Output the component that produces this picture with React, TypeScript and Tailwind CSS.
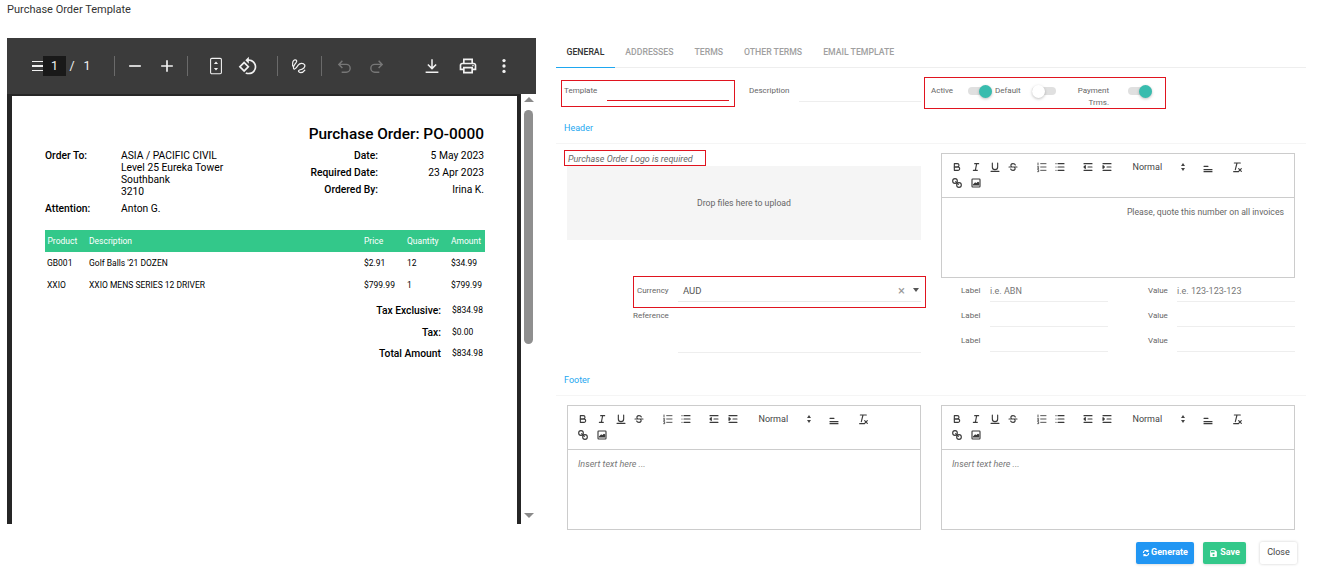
import type { ReactNode } from 'react';

function PdfIcon({ children, size = 20 }: { children: ReactNode; size?: number }) {
  return (
    <div className="flex w-[32px] h-[32px] items-center justify-center shrink-0">
      <svg width={size} height={size} viewBox="0 0 24 24" fill="currentColor">
        {children}
      </svg>
    </div>
  );
}

function PdfSeparator() {
  return <div className="w-px h-[20px] bg-[#6a6a6a] shrink-0" />;
}

function PdfToolbar() {
  return (
    <div className="flex items-center h-[56px] bg-[#3b3b3b] text-[#f1f1f1] text-[12.5px] shrink-0">
      <div className="ml-[25px] w-[11px] h-[10px] border-y-[1.5px] border-[#f1f1f1] flex items-center shrink-0">
        <div className="w-full h-[1.5px] bg-[#f1f1f1]" />
      </div>
      <div className="w-[23px] h-[20px] bg-[#191919] flex items-center justify-center shrink-0">1</div>
      <span className="w-[12px] text-center shrink-0">/</span>
      <span className="w-[18px] text-center shrink-0">1</span>
      <div className="ml-[18px]"><PdfSeparator /></div>
      <div className="ml-[4px]">
        <PdfIcon><path d="M19 13H5v-2h14v2z" /></PdfIcon>
      </div>
      <PdfIcon><path d="M19 13h-6v6h-2v-6H5v-2h6V5h2v6h6v2z" /></PdfIcon>
      <div className="ml-[4px]"><PdfSeparator /></div>
      <div className="ml-[12px]">
        <PdfIcon>
          <rect x="5.500" y="2.800" width="13" height="18.400" rx="1.500" fill="none" stroke="currentColor" strokeWidth="1.300" />
          <path d="M12 6.500l2.500 3h-5zM12 17.500l-2.500-3h5z" />
        </PdfIcon>
      </div>
      <PdfIcon>
        <path d="M7.34 6.41L.86 12.9l6.49 6.48 6.49-6.48-6.5-6.49zM3.69 12.9l3.66-3.66L11 12.9l-3.66 3.66-3.65-3.66zm15.67-6.26C17.61 4.88 15.3 4 13 4V.76L8.76 5 13 9.24V6c1.79 0 3.58.68 4.95 2.05 2.73 2.73 2.73 7.17 0 9.9C16.58 19.32 14.79 20 13 20c-.97 0-1.94-.21-2.84-.61l-1.49 1.49C10.02 21.62 11.51 22 13 22c2.3 0 4.61-.88 6.36-2.64 3.52-3.51 3.52-9.21 0-12.72z" />
      </PdfIcon>
      <div className="ml-[13px]"><PdfSeparator /></div>
      <div className="ml-[5px]">
        <PdfIcon>
          <path
            d="M4.400 12C4 8 5 5 7 4.600C9 4.400 10 6 8.500 8C6.500 10.500 4.500 13 5.500 15C6.500 17 9 14 11 11C13 8.500 17 8 19 11C19.500 14 16 16 12.500 16.800C10.500 17.500 11.500 20 14 20C16 20 18 18.500 19 17"
            fill="none"
            stroke="currentColor"
            strokeWidth="1.500"
            strokeLinecap="round"
            strokeLinejoin="round"
          />
        </PdfIcon>
      </div>
      <div className="ml-[6px]"><PdfSeparator /></div>
      <div className="ml-[6px] text-[#777777]">
        <PdfIcon size={17}>
          <path d="M9 14 4 9l5-5M4 9h10.500a5.500 5.500 0 0 1 0 11H8" fill="none" stroke="currentColor" strokeWidth="2" />
        </PdfIcon>
      </div>
      <div className="text-[#777777]">
        <PdfIcon size={17}>
          <path d="M15 14l5-5-5-5M20 9H9.500a5.500 5.500 0 0 0 0 11H16" fill="none" stroke="currentColor" strokeWidth="2" />
        </PdfIcon>
      </div>
      <div className="ml-[24px]">
        <PdfIcon size={18}>
          <path d="M12 3v12M6.500 10l5.500 5.500 5.500-5.500M3.500 20.200h17" fill="none" stroke="currentColor" strokeWidth="2" />
        </PdfIcon>
      </div>
      <div className="ml-[4px]">
        <PdfIcon>
          <path d="M19 8h-1V3H6v5H5c-1.66 0-3 1.34-3 3v6h4v4h12v-4h4v-6c0-1.66-1.34-3-3-3zM8 5h8v3H8V5zm8 12v2H8v-4h8v2zm2-2v-2H6v2H4v-4c0-.55.45-1 1-1h14c.55 0 1 .45 1 1v4h-2z" />
          <circle cx="18" cy="11.500" r="1" />
        </PdfIcon>
      </div>
      <div className="ml-[4px]">
        <PdfIcon>
          <circle cx="12" cy="5.500" r="2" />
          <circle cx="12" cy="12" r="2" />
          <circle cx="12" cy="18.500" r="2" />
        </PdfIcon>
      </div>
    </div>
  );
}

function InfoRow({ label, value }: { label: string; value: string }) {
  return (
    <div className="flex h-[12px] items-center whitespace-nowrap">
      <span className="w-[68px] text-right font-medium">{label}</span>
      <span className="w-[106px] text-right">{value}</span>
    </div>
  );
}

function TotalRow({ label, value }: { label: string; value: string }) {
  return (
    <div className="flex h-[21.5px] items-center">
      <span className="w-[396px] text-right text-[10.3px] font-medium">{label}</span>
      <span className="ml-[11px] text-[8.5px]">{value}</span>
    </div>
  );
}

const lineItems = [
  { code: 'GB001', name: "Golf Balls '21 DOZEN", price: '$2.91', qty: '12', amount: '$34.99' },
  { code: 'XXIO', name: 'XXIO MENS SERIES 12 DRIVER', price: '$799.99', qty: '1', amount: '$799.99' },
];

function PdfPage() {
  return (
    <div className="flex-1 bg-white pl-[33px] pt-[29px] text-black text-[10.3px] overflow-hidden">
      <div className="w-[439px] text-right text-[15.4px] leading-[18px] font-medium whitespace-nowrap">
        Purchase Order: PO-0000
      </div>
      <div className="flex mt-[7px] w-[439px] justify-between">
        <div>
          <div className="flex">
            <span className="w-[76px] font-medium leading-[12px]">Order To:</span>
            <div className="leading-[12px]">
              <div>ASIA / PACIFIC CIVIL</div>
              <div>Level 25 Eureka Tower</div>
              <div>Southbank</div>
              <div>3210</div>
            </div>
          </div>
          <div className="flex mt-[5px] leading-[12px]">
            <span className="w-[76px] font-medium">Attention:</span>
            <span>Anton G.</span>
          </div>
        </div>
        <div className="flex flex-col gap-[5px]">
          <InfoRow label="Date:" value="5 May 2023" />
          <InfoRow label="Required Date:" value="23 Apr 2023" />
          <InfoRow label="Ordered By:" value="Irina K." />
        </div>
      </div>
      <div className="mt-[15px] w-[440px] h-[22px] bg-[#33c88a] text-white text-[8.5px] grid grid-cols-[44px_275px_43px_44px_34px] items-center">
        <span className="pl-[2.5px]">Product</span>
        <span>Description</span>
        <span>Price</span>
        <span>Quantity</span>
        <span>Amount</span>
      </div>
      {lineItems.map((item) => (
        <div key={item.code} className="w-[440px] h-[22px] text-[8.5px] grid grid-cols-[44px_275px_43px_44px_34px] items-center whitespace-nowrap">
          <span className="pl-[2px]">{item.code}</span>
          <span>{item.name}</span>
          <span>{item.price}</span>
          <span>{item.qty}</span>
          <span>{item.amount}</span>
        </div>
      ))}
      <div className="mt-[4px]">
        <TotalRow label="Tax Exclusive:" value="$834.98" />
        <TotalRow label="Tax:" value="$0.00" />
        <TotalRow label="Total Amount" value="$834.98" />
      </div>
    </div>
  );
}

function PdfViewer() {
  return (
    <div className="w-[529px] h-[486px] flex flex-col shrink-0">
      <PdfToolbar />
      <div className="flex-1 flex min-h-0">
        <div className="flex-1 flex flex-col bg-[#262626] pl-[5px] pt-[2px] pr-[4px] min-w-0">
          <PdfPage />
        </div>
        <div className="w-[15px] bg-white flex flex-col items-center shrink-0">
          <div className="mt-[3px] w-0 h-0 border-x-[5px] border-x-transparent border-b-[5px] border-b-[#8a8a8a]" />
          <div className="mt-[8px] w-[9px] h-[234px] rounded-full bg-[#8f8f8f]" />
          <div className="mt-auto mb-[6px] w-0 h-0 border-x-[5px] border-x-transparent border-t-[5px] border-t-[#8a8a8a]" />
        </div>
      </div>
    </div>
  );
}

function EditorIcon({ children }: { children: ReactNode }) {
  return (
    <div className="w-[18.7px] h-[16px] flex items-center justify-center shrink-0">
      <svg width="12" height="12" viewBox="0 0 18 18" fill="none" stroke="#3a3a3a" strokeWidth="1.7" strokeLinecap="round" strokeLinejoin="round">
        {children}
      </svg>
    </div>
  );
}

function EditorToolbar() {
  return (
    <div className="h-[44px] border-b border-[#cccccc] pl-[6px] pt-[5px]">
      <div className="flex items-center h-[16px]">
        <EditorIcon>
          <path d="M5,4H9.500A2.500,2.500,0,0,1,12,6.500v0A2.500,2.500,0,0,1,9.500,9H5V4Z" />
          <path d="M5,9h5.500A2.500,2.500,0,0,1,13,11.500v0A2.500,2.500,0,0,1,10.500,14H5V9Z" />
        </EditorIcon>
        <EditorIcon>
          <path d="M7 4h6M5 14h6M8 14l2-10" />
        </EditorIcon>
        <EditorIcon>
          <path d="M5,3V9a4,4,0,0,0,4,4h0a4,4,0,0,0,4-4V3M3 15.500h12" />
        </EditorIcon>
        <EditorIcon>
          <path d="M3 9h12M12.500 6C12 4.500 10.500 4 9 4 6 4 5 6.500 6.500 8M5.500 12c.5 1.500 2 2 3.500 2 3 0 4-2.500 2.500-4" />
        </EditorIcon>
        <div className="ml-[9.500px]" />
        <EditorIcon>
          <path d="M7 4h8M7 9h8M7 14h8M3 3v3M2.500 8.500h1.500L2.500 11h1.500M2.500 13h1.500v3h-1.500" strokeWidth="1.300" />
        </EditorIcon>
        <EditorIcon>
          <path d="M6 4h9M6 9h9M6 14h9M3 4h.01M3 9h.01M3 14h.01" />
        </EditorIcon>
        <div className="ml-[9.500px]" />
        <EditorIcon>
          <path d="M3 14h12M3 4h12M9 9h6M5 7v4L3 9z" />
        </EditorIcon>
        <EditorIcon>
          <path d="M3 14h12M3 4h12M9 9h6M3 7v4l2-2z" />
        </EditorIcon>
        <span className="ml-[16px] w-[46px] text-[9px] leading-[12px] text-[#444444]">Normal</span>
        <div className="flex flex-col gap-[1.500px] w-[8px] items-center">
          <div className="w-0 h-0 border-x-[2.500px] border-x-transparent border-b-[3px] border-b-[#444444]" />
          <div className="w-0 h-0 border-x-[2.500px] border-x-transparent border-t-[3px] border-t-[#444444]" />
        </div>
        <div className="ml-[12px]">
          <EditorIcon>
            <path d="M3 8h6M3 13h12M3 16h12" />
          </EditorIcon>
        </div>
        <div className="ml-[10px]">
          <EditorIcon>
            <path d="M5 3h9M9 3l-2.500 10M4 16h7M11.500 11.500l4 4M15.500 11.500l-4 4" />
          </EditorIcon>
        </div>
      </div>
      <div className="flex items-center h-[16px]">
        <EditorIcon>
          <path d="M7 7l4 4" />
          <circle cx="6" cy="6" r="3.500" />
          <circle cx="12" cy="12" r="3.500" />
        </EditorIcon>
        <EditorIcon>
          <rect x="3" y="3" width="12" height="12" rx="1" />
          <path d="M5 12l3-3 1.500 1.500L12 8l1 1v3z" fill="#3a3a3a" />
        </EditorIcon>
      </div>
    </div>
  );
}

function Editor({ children }: { children: ReactNode }) {
  return (
    <div className="w-[354px] h-[125px] border border-[#cccccc]">
      <EditorToolbar />
      {children}
    </div>
  );
}

function FieldLabel({ children }: { children: ReactNode }) {
  return <span className="block text-[8px] leading-[12px] text-[#666666] whitespace-nowrap">{children}</span>;
}

function Toggle({ on }: { on: boolean }) {
  return (
    <div className={`w-[24px] h-[8px] rounded-full bg-[#e0e0e0] flex items-center shrink-0 ${on ? 'justify-end' : 'justify-start'}`}>
      <div className={`w-[13px] h-[13px] rounded-full shadow-[0_1px_3px_rgba(0,0,0,0.25)] ${on ? 'bg-[#38bcae]' : 'bg-white'}`} />
    </div>
  );
}

function MetaRow({ placeholderLabel, placeholderValue }: { placeholderLabel?: string; placeholderValue?: string }) {
  return (
    <div className="flex h-[25px] items-start">
      <div className="w-[29px] ml-[20px] shrink-0 pt-[2px]"><FieldLabel>Label</FieldLabel></div>
      <div className="w-[118px] h-[19px] pt-[1px] border-b border-[#eeeeee] text-[9px] leading-[14px] text-[#777777] shrink-0">{placeholderLabel}</div>
      <div className="w-[29px] ml-[40px] shrink-0 pt-[2px]"><FieldLabel>Value</FieldLabel></div>
      <div className="w-[118px] h-[19px] pt-[1px] border-b border-[#eeeeee] text-[9px] leading-[14px] text-[#777777] shrink-0">{placeholderValue}</div>
    </div>
  );
}

const tabs = ['GENERAL', 'ADDRESSES', 'TERMS', 'OTHER TERMS', 'EMAIL TEMPLATE'];

function TemplateForm() {
  return (
    <div className="w-[750px] h-[540px] ml-[20px] shrink-0 text-[#555555]">
      <div className="flex h-[30px] border-b border-[#eeeeee]">
        {tabs.map((tab, index) => (
          <div
            key={tab}
            className={`h-[30px] px-[10.500px] pt-[8px] text-[8.7px] leading-[13px] font-medium whitespace-nowrap ${
              index === 0 ? 'text-[#333333] border-b border-[#1ea7f0]' : 'text-[#a0a0a0]'
            }`}
          >
            {tab}
          </div>
        ))}
      </div>

      <div className="flex items-start h-[45px] pl-[5px]">
        <div className="mt-[12px] w-[174px] h-[27px] border border-[#e0141f] pl-[2px] pt-[4px] relative shrink-0">
          <FieldLabel>Template</FieldLabel>
          <div className="absolute left-[45px] top-[19px] w-[122px] border-b border-[#e0141f]" />
        </div>
        <div className="mt-[17px] ml-[14px] w-[50px] shrink-0"><FieldLabel>Description</FieldLabel></div>
        <div className="mt-[16px] w-[122px] h-[18px] border-b border-[#eeeeee] shrink-0" />
        <div className="mt-[9px] ml-[3px] w-[242px] h-[32px] border border-[#e0141f] flex pl-[6px] pt-[6px] shrink-0">
          <div className="w-[37px] pt-[1px] shrink-0"><FieldLabel>Active</FieldLabel></div>
          <div className="pt-[3px]"><Toggle on /></div>
          <div className="w-[37px] ml-[3px] pt-[1px] shrink-0"><FieldLabel>Default</FieldLabel></div>
          <div className="pt-[3px]"><Toggle on={false} /></div>
          <div className="w-[52px] ml-[21px] pt-[1px] shrink-0 text-right pr-[20px]">
            <FieldLabel>Payment</FieldLabel>
            <FieldLabel>Trms.</FieldLabel>
          </div>
          <div className="pt-[3px] -ml-[1px]"><Toggle on /></div>
        </div>
      </div>

      <div className="h-[31px] pl-[8px] pt-[9px] border-b border-[#f5f5f5] text-[9px] leading-[12px] text-[#1ea7f0]">Header</div>

      <div className="flex h-[230px]">
        <div className="w-[385px] shrink-0">
          <div className="ml-[8px] mt-[6px] w-[142px] h-[16px] border border-[#e0141f] pl-[3px] text-[9px] leading-[16px] italic text-[#666666] whitespace-nowrap">
            Purchase Order Logo is required
          </div>
          <div className="ml-[11px] w-[354px] h-[74px] pt-[2px] bg-[#f5f5f5] flex items-center justify-center text-[8.7px] text-[#666666]">
            Drop files here to upload
          </div>
          <div className="ml-[77px] mt-[36px] w-[293px] h-[32px] border border-[#e0141f] flex pl-[3px]">
            <div className="w-[41px] pt-[8px] shrink-0"><FieldLabel>Currency</FieldLabel></div>
            <div className="w-[243px] h-[25px] border-b border-[#e8e8e8] pl-[5px] pt-[7px] text-[9.500px] leading-[14px] flex">
              <span className="flex-1">AUD</span>
              <span className="text-[#999999] text-[13px] leading-[13px] pr-[8px]">×</span>
              <div className="mt-[4px] mr-[2px] w-0 h-0 border-x-[3.500px] border-x-transparent border-t-[4px] border-t-[#555555]" />
            </div>
          </div>
          <div className="ml-[77px] flex">
            <div className="w-[45px] pt-[2px] shrink-0"><FieldLabel>Reference</FieldLabel></div>
            <div className="w-[243px] h-[45px] border-b border-[#eeeeee]" />
          </div>
        </div>
        <div className="w-[365px]">
          <div className="mt-[9px]">
            <Editor>
              <div className="pr-[10px] pt-[8px] text-right text-[8.7px] leading-[13px] text-[#666666]">Please, quote this number on all invoices</div>
            </Editor>
          </div>
          <div className="mt-[5px]">
            <MetaRow placeholderLabel="i.e. ABN" placeholderValue="i.e. 123-123-123" />
            <MetaRow />
            <MetaRow />
          </div>
        </div>
      </div>

      <div className="h-[22px] pl-[8px] border-b border-[#f5f5f5] text-[9px] leading-[12px] text-[#1ea7f0]">Footer</div>

      <div className="flex gap-[20px] pl-[11px] mt-[9px]">
        <Editor>
          <div className="pl-[10px] pt-[8px] text-[9px] leading-[13px] italic text-[#777777]">Insert text here ...</div>
        </Editor>
        <Editor>
          <div className="pl-[10px] pt-[8px] text-[9px] leading-[13px] italic text-[#777777]">Insert text here ...</div>
        </Editor>
      </div>

      <div className="flex mt-[12px] pl-[580px] text-[9px] font-bold text-white items-center">
        <button className="w-[58px] h-[22px] bg-[#2196f3] rounded-[2px] flex items-center justify-center gap-[1px] shadow-sm">
          <svg width="8" height="8" viewBox="0 0 24 24" fill="none" stroke="white" strokeWidth="3.500">
            <path d="M20 12a8 8 0 0 1-14 5.300M4 12a8 8 0 0 1 14-5.300M18 2v5h-5M6 22v-5h5" />
          </svg>
          Generate
        </button>
        <button className="ml-[9px] w-[43px] h-[22px] bg-[#33c88a] rounded-[2px] flex items-center justify-center gap-[2px] shadow-sm">
          <svg width="9" height="9" viewBox="0 0 24 24" fill="white">
            <path d="M17 3H5a2 2 0 0 0-2 2v14a2 2 0 0 0 2 2h14a2 2 0 0 0 2-2V7l-4-4zm-5 16a3 3 0 1 1 0-6 3 3 0 0 1 0 6zm3-10H5V5h10v4z" />
          </svg>
          Save
        </button>
        <button className="ml-[14px] w-[37px] h-[22px] bg-white rounded-[2px] font-normal text-[#444444] shadow-[0_0_3px_rgba(0,0,0,0.2)]">Close</button>
      </div>
    </div>
  );
}

export default function App() {
  return (
    <div className="w-[1325px] h-[578px] bg-white overflow-hidden font-['Roboto',sans-serif]">
      <div className="h-[38px] pl-[7px] pt-[3px] text-[11px] leading-[14px] text-[#333333]">Purchase Order Template</div>
      <div className="flex pl-[7px]">
        <PdfViewer />
        <TemplateForm />
      </div>
    </div>
  );
}
